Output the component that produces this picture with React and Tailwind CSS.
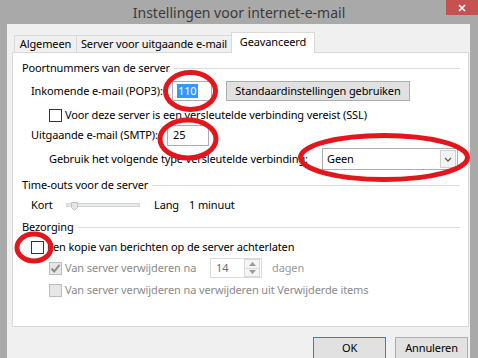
import React from 'react'

function Checkbox({ checked = false, disabled = false }) {
  return (
    <span
      className={`w-[13px] h-[13px] shrink-0 border flex items-center justify-center ${
        disabled ? 'border-[#bcbcbc] bg-[#e6e6e6]' : 'border-[#333333] bg-white'
      }`}
    >
      {checked && (
        <svg width="11" height="11" viewBox="0 0 11 11">
          <path d="M1.5 5.5 L4.2 8.5 L9.5 1.8" fill="none" stroke={disabled ? '#8d8d8d' : '#222'} strokeWidth="2" />
        </svg>
      )}
    </span>
  )
}

function GroupHeader({ children }) {
  return (
    <div className="h-[16px] flex items-center gap-[4px] pl-[9px] pr-[8px]">
      <span className="whitespace-nowrap">{children}</span>
      <span className="flex-1 h-px bg-[#dcdcdc]" />
    </div>
  )
}

export default function App() {
  return (
    <div
      className="relative w-[478px] h-[358px] bg-[#a9a9a9] flex flex-col overflow-hidden text-[11px] tracking-[-0.12px] text-black"
      style={{ fontFamily: '"Noto Sans", "Open Sans", sans-serif' }}
    >
      {/* title bar */}
      <div className="h-[24px] shrink-0 grid grid-cols-[1fr_auto_1fr]">
        <div />
        <div className="flex items-center text-[14px] tracking-normal text-[#3a3a3a] whitespace-nowrap leading-none pt-[1px]">
          Instellingen voor internet-e-mail
        </div>
        <div className="flex justify-end items-start">
          <div className="w-[32px] h-[15px] bg-[#c75050] flex items-center justify-center">
            <svg width="8" height="8" viewBox="0 0 8 8">
              <path d="M1 1 L7 7 M7 1 L1 7" stroke="white" strokeWidth="1.6" />
            </svg>
          </div>
        </div>
      </div>

      {/* dialog body */}
      <div className="flex-1 ml-[7px] mr-[8px] bg-[#f0f0f0] flex flex-col pt-[8px]">
        {/* tabs */}
        <div className="flex items-end pl-[7px] h-[21px] relative z-10">
          <div className="w-[63px] h-[17px] flex items-center justify-center border border-b-0 border-[#d9d9d9] bg-[#f0f0f0] mb-px">
            Algemeen
          </div>
          <div className="w-[155px] h-[17px] flex items-center justify-center border border-b-0 border-l-0 border-[#d9d9d9] bg-[#f0f0f0] mb-px">
            Server voor uitgaande e-mail
          </div>
          <div className="w-[84px] h-[21px] -ml-px flex items-center justify-center border border-b-0 border-[#d9d9d9] bg-white pb-[2px]">
            Geavanceerd
          </div>
        </div>

        {/* tab panel */}
        <div className="ml-[5px] w-[457px] h-[275px] -mt-px border border-[#d9d9d9] bg-white flex flex-col">
          <div className="mt-[7px]">
            <GroupHeader>Poortnummers van de server</GroupHeader>
          </div>

          <div className="mt-[5px] h-[20px] flex items-center pl-[18px]">
            <span className="w-[141px] whitespace-nowrap">Inkomende e-mail (POP3):</span>
            <div className="w-[40px] h-[20px] border border-[#abadb3] bg-white flex items-center pl-[4px]">
              <span className="bg-[#3399ff] text-white leading-[14px] px-px">110</span>
            </div>
            <button className="ml-[14px] w-[184px] h-[20px] border border-[#adadad] bg-[#e1e1e1] flex items-center justify-center whitespace-nowrap">
              Standaardinstellingen gebruiken
            </button>
          </div>

          <div className="mt-[6px] h-[16px] flex items-center gap-[3px] pl-[36px]">
            <Checkbox />
            <span className="whitespace-nowrap">Voor deze server is een versleutelde verbinding vereist (SSL)</span>
          </div>

          <div className="mt-[2px] h-[21px] flex items-center pl-[18px]">
            <span className="w-[136px] whitespace-nowrap">Uitgaande e-mail (SMTP):</span>
            <div className="w-[42px] h-[21px] border border-[#abadb3] bg-white flex items-center pl-[5px]">25</div>
          </div>

          <div className="mt-[2px] h-[22px] flex items-center pl-[36px]">
            <span className="w-[273px] whitespace-nowrap">Gebruik het volgende type versleutelde verbinding:</span>
            <div className="w-[136px] h-[22px] border border-[#acacac] bg-white flex items-center justify-between pl-[4px] pr-px">
              <span>Geen</span>
              <span className="w-[16px] h-[18px] border border-[#d0d0d0] bg-[#f4f4f4] flex items-center justify-center">
                <svg width="8" height="5" viewBox="0 0 8 5">
                  <path d="M1 1 L4 4 L7 1" fill="none" stroke="#606060" strokeWidth="1.3" />
                </svg>
              </span>
            </div>
          </div>

          <div className="mt-[7px]">
            <GroupHeader>Time-outs voor de server</GroupHeader>
          </div>

          <div className="mt-[4px] h-[16px] flex items-center pl-[18px]">
            <span className="w-[35px]">Kort</span>
            <div className="relative w-[74px] h-[4px] border border-[#d6d6d6] bg-[#e7eaea]">
              <svg className="absolute left-[4px] -top-[2px]" width="7" height="9" viewBox="0 0 7 9">
                <path d="M0.5 0.5 H6.5 V5.5 L3.5 8.5 L0.5 5.5 Z" fill="#e6e6e6" stroke="#c4c4c4" />
              </svg>
            </div>
            <span className="ml-[14px]">Lang</span>
            <span className="ml-[10px]">1 minuut</span>
          </div>

          <div className="mt-[6px]">
            <GroupHeader>Bezorging</GroupHeader>
          </div>

          <div className="mt-[4px] h-[16px] flex items-center gap-[3px] pl-[18px]">
            <Checkbox />
            <span className="whitespace-nowrap">Een kopie van berichten op de server achterlaten</span>
          </div>

          <div className="mt-[3px] h-[20px] flex items-center pl-[36px] text-[#8a8a8a]">
            <div className="w-[161px] flex items-center gap-[3px]">
              <Checkbox checked disabled />
              <span className="whitespace-nowrap">Van server verwijderen na</span>
            </div>
            <div className="w-[52px] h-[20px] border border-[#d9d9d9] bg-white flex items-center justify-between pl-[5px] pr-px">
              <span className="text-[#6d6d6d]">14</span>
              <span className="w-[16px] h-[18px] border border-[#d9d9d9] bg-[#f4f4f4] flex flex-col">
                <span className="flex-1 flex items-center justify-center border-b border-[#d9d9d9]">
                  <svg width="7" height="4" viewBox="0 0 7 4"><path d="M0 4 L3.5 0 L7 4 Z" fill="#9a9a9a" /></svg>
                </span>
                <span className="flex-1 flex items-center justify-center">
                  <svg width="7" height="4" viewBox="0 0 7 4"><path d="M0 0 L3.5 4 L7 0 Z" fill="#9a9a9a" /></svg>
                </span>
              </span>
            </div>
            <span className="ml-[10px] text-[#9a9a9a]">dagen</span>
          </div>

          <div className="mt-[4px] h-[16px] flex items-center gap-[3px] pl-[36px] text-[#8a8a8a]">
            <Checkbox disabled />
            <span className="whitespace-nowrap">Van server verwijderen na verwijderen uit Verwijderde items</span>
          </div>
        </div>

        {/* buttons */}
        <div className="mt-[10px] flex justify-end gap-[9px] pr-[2px]">
          <button className="w-[73px] h-[23px] border border-[#3c7fb1] bg-[#e1e1e1]">OK</button>
          <button className="w-[73px] h-[23px] border border-[#adadad] bg-[#e1e1e1]">Annuleren</button>
        </div>
      </div>

      {/* red annotation circles */}
      <svg className="absolute inset-0 pointer-events-none" width="478" height="358" viewBox="0 0 478 358">
        <g fill="none" stroke="#e3161e" strokeWidth="5">
          <ellipse cx="190.5" cy="91" rx="25" ry="18.5" />
          <ellipse cx="188" cy="139" rx="28" ry="19" />
          <ellipse cx="384" cy="157.5" rx="83.5" ry="22" />
          <ellipse cx="34" cy="247.5" rx="17" ry="13.5" />
        </g>
      </svg>
    </div>
  )
}
